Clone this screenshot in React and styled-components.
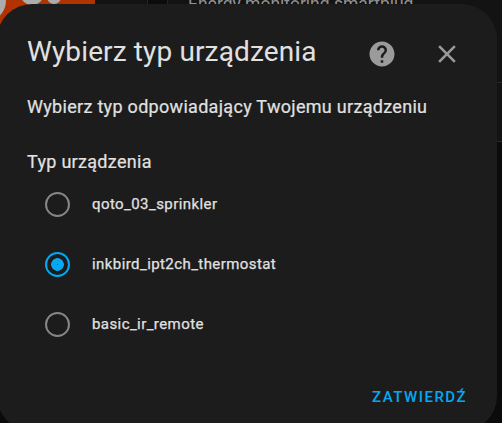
import React, { useState } from "react";
import styled, { createGlobalStyle } from "styled-components";

const GlobalStyle = createGlobalStyle`
  * { box-sizing: border-box; }
  body { margin: 0; background: #0b0b0b; overflow: hidden; font-family: Roboto, sans-serif; }
`;

const Page = styled.main`
  position: relative;
  width: 502px;
  height: 423px;
  overflow: hidden;
  background: #0b0b0b;
`;

const Backdrop = styled.div`
  display: grid;
  grid-template-columns: 95px 52px 20px 1fr;
  height: 142px;
  background: #131313;
`;

const Logo = styled.svg`
  display: block;
`;

const Panel = styled.div`
  background: #131313;
`;

const Gutter = styled.div`
  background: #0b0b0b;
  border-left: 1px solid #232323;
`;

const DeviceList = styled.div`
  border-left: 1px solid #232323;
  border-bottom: 1px solid #282828;
`;

const DeviceName = styled.div`
  height: 89px;
  margin-top: -6px;
  padding-left: 20px;
  border-bottom: 1px solid #282828;
  color: #929292;
  font-size: 17.5px;
  line-height: 20px;
  white-space: nowrap;
`;

const Dialog = styled.section`
  position: absolute;
  left: -3px;
  top: 4px;
  width: 500px;
  height: 427px;
  padding: 0 30px;
  border-radius: 35px;
  background: #1c1c1c;
  color: #e1e1e1;
`;

const Header = styled.header`
  display: flex;
  align-items: center;
  height: 91px;
  padding-top: 9px;
`;

const Title = styled.h1`
  flex: 1;
  margin: 0 0 5px;
  font-size: 28px;
  font-weight: 400;
  line-height: 36px;
  letter-spacing: 0.13px;
  white-space: nowrap;
`;

const HeaderActions = styled.div`
  display: flex;
  gap: 35px;
  margin-right: 5px;
`;

const IconButton = styled.button`
  display: flex;
  width: 30px;
  height: 30px;
  padding: 0;
  border: 0;
  background: none;
  color: #9b9b9b;
`;

const Description = styled.p`
  margin: 0 0 31px;
  font-size: 18px;
  line-height: 24px;
  letter-spacing: 0.3px;
  -webkit-text-stroke: 0.2px currentColor;
  white-space: nowrap;
`;

const FieldLabel = styled.div`
  font-size: 18px;
  line-height: 24px;
  letter-spacing: 0.3px;
  -webkit-text-stroke: 0.2px currentColor;
`;

const Choices = styled.div`
  display: grid;
  grid-auto-rows: 60px;
`;

const Choice = styled.label`
  display: flex;
  align-items: center;
  gap: 22px;
  padding-left: 18px;
  font-size: 15px;
  letter-spacing: 0.42px;
  -webkit-text-stroke: 0.25px currentColor;
`;

const Radio = styled.input`
  appearance: none;
  width: 25px;
  height: 25px;
  margin: 0;
  border: 2px solid #868686;
  border-radius: 50%;
  &:checked {
    border-color: #03a9f4;
    background: radial-gradient(circle, #0a5577 0 0.5px, #03a9f4 0.7px 6px, transparent 6.6px);
  }
`;

const Submit = styled.button`
  display: block;
  margin: 33px 0 0 auto;
  padding: 0;
  border: 0;
  background: none;
  color: #03a9f4;
  font: 500 15px/20px Roboto, sans-serif;
  letter-spacing: 1.5px;
`;

const options = ["qoto_03_sprinkler", "inkbird_ipt2ch_thermostat", "basic_ir_remote"];

export default function App() {
  const [selected, setSelected] = useState(options[1]);
  return (
    <Page>
      <GlobalStyle />
      <Backdrop>
        <Logo width="95" height="142" viewBox="0 0 95 142">
          <rect width="95" height="142" fill="#b13300" />
          <ellipse cx="-7" cy="0" rx="13" ry="18" fill="#acacac" />
          <circle cx="32" cy="-7" r="12" fill="#acacac" />
          <circle cx="54" cy="-3" r="7" fill="#acacac" />
        </Logo>
        <Panel />
        <Gutter />
        <DeviceList><DeviceName>Energy monitoring smartplug</DeviceName></DeviceList>
      </Backdrop>
      <Dialog role="dialog">
        <Header>
          <Title>Wybierz typ urządzenia</Title>
          <HeaderActions>
            <IconButton aria-label="Pomoc">
              <svg width="30" height="30" viewBox="0 0 24 24" fill="currentColor"><path d="M15.07,11.25L14.17,12.17C13.45,12.89 13,13.5 13,15H11V14.5C11,13.39 11.45,12.39 12.17,11.67L13.41,10.41C13.78,10.05 14,9.55 14,9C14,7.89 13.1,7 12,7A2,2 0 0,0 10,9H8A4,4 0 0,1 12,5A4,4 0 0,1 16,9C16,9.88 15.64,10.67 15.07,11.25M13,19H11V17H13M12,2A10,10 0 0,0 2,12A10,10 0 0,0 12,22A10,10 0 0,0 22,12C22,6.47 17.5,2 12,2Z" /></svg>
            </IconButton>
            <IconButton aria-label="Zamknij">
              <svg width="30" height="30" viewBox="0 0 24 24" fill="currentColor"><path d="M19,6.41L17.59,5L12,10.59L6.41,5L5,6.41L10.59,12L5,17.59L6.41,19L12,13.41L17.59,19L19,17.59L13.41,12L19,6.41Z" /></svg>
            </IconButton>
          </HeaderActions>
        </Header>
        <Description>Wybierz typ odpowiadający Twojemu urządzeniu</Description>
        <FieldLabel>Typ urządzenia</FieldLabel>
        <Choices>
          {options.map((name) => (
            <Choice key={name}>
              <Radio type="radio" name="device" checked={selected === name} onChange={() => setSelected(name)} />
              {name}
            </Choice>
          ))}
        </Choices>
        <Submit>ZATWIERDŹ</Submit>
      </Dialog>
    </Page>
  );
}
